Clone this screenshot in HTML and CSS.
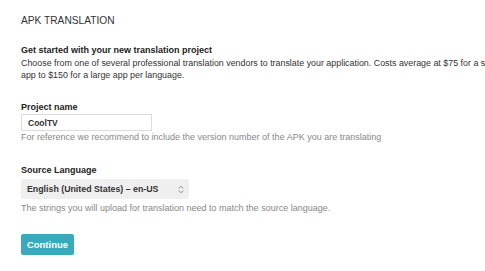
FILE: index.html
```html
<!DOCTYPE html>
<html lang="en">
<head>
    <meta charset="UTF-8">
    <title>APK Translation</title>
    <link rel="stylesheet" href="styles.css">
</head>
<body>
    <div class="page">
        <h1 class="title">APK TRANSLATION</h1>

        <div class="intro">
            <h2 class="intro-title">Get started with your new translation project</h2>
            <p class="intro-text">Choose from one of several professional translation vendors to translate your application. Costs average at $75 for a small app to $150 for a large app per language.</p>
        </div>

        <div class="field field-name">
            <label class="field-label" for="project-name">Project name</label>
            <input class="text-input" id="project-name" type="text" value="CoolTV">
            <div class="hint">For reference we recommend to include the version number of the APK you are translating</div>
        </div>

        <div class="field field-lang">
            <label class="field-label" for="source-lang">Source Language</label>
            <div class="select">
                <span id="source-lang">English (United States) &ndash; en-US</span>
                <svg class="select-arrows" width="6" height="9" viewBox="0 0 6 9">
                    <path d="M0.8 3.4 L3 1.2 L5.2 3.4 M0.8 5.6 L3 7.8 L5.2 5.6" fill="none" stroke="#888" stroke-width="1"/>
                </svg>
            </div>
            <div class="hint">The strings you will upload for translation need to match the source language.</div>
        </div>

        <button class="btn-continue">Continue</button>
    </div>
</body>
</html>
```

FILE: styles.css
```css
html, body {
    overflow: hidden;
}
body {
    margin: 0;
    background: #fff;
    font-family: 'Liberation Sans', Arial, sans-serif;
    color: #222;
}
.page {
    width: 496px;
    padding: 14px 0 0 21px;
}
.title {
    margin: 0;
    font-size: 10.2px;
    font-weight: normal;
    line-height: 14px;
    color: #333;
}
.intro {
    margin-top: 16px;
}
.intro-title {
    margin: 0;
    font-size: 9px;
    line-height: 13px;
    font-weight: bold;
}
.intro-text {
    margin: 0;
    font-size: 8.9px;
    line-height: 12px;
    color: #333;
}
.field-name {
    margin-top: 20px;
}
.field-lang {
    margin-top: 21px;
}
.field-label {
    display: block;
    font-size: 9px;
    line-height: 13px;
    font-weight: bold;
}
.text-input {
    display: block;
    box-sizing: border-box;
    width: 131px;
    height: 17px;
    margin: 0;
    padding: 0 6px;
    border: 1px solid #dcdcdc;
    font-family: inherit;
    font-size: 8.5px;
    font-weight: bold;
    color: #333;
}
.hint {
    font-size: 9px;
    line-height: 12px;
    color: #888;
}
.select {
    display: flex;
    align-items: center;
    justify-content: space-between;
    box-sizing: border-box;
    width: 168px;
    height: 20px;
    margin: 2px 0 3px;
    padding: 0 5px 0 6px;
    background: #efefef;
    border-radius: 2px;
    font-size: 8.8px;
    font-weight: bold;
    color: #333;
}
.btn-continue {
    display: block;
    margin-top: 20px;
    width: 53px;
    height: 21px;
    padding: 0;
    border: none;
    border-radius: 2px;
    background: #39aabe;
    color: #fff;
    font-family: inherit;
    font-size: 9.5px;
    font-weight: bold;
}
```
